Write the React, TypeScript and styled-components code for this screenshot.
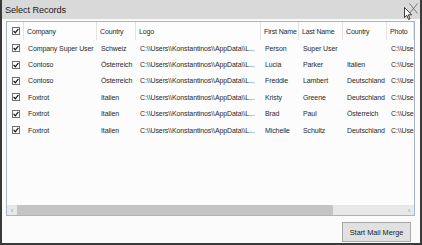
import styled, { createGlobalStyle } from 'styled-components'

const GlobalStyle = createGlobalStyle`
  html, body {
    margin: 0;
    padding: 0;
    background: #fbfbfb;
  }
  body {
    font-family: "Liberation Sans", Arial, sans-serif;
  }
`

type Record = {
  company: string
  country: string
  logo: string
  firstName: string
  lastName: string
  country2: string
  photo: string
}

const LOGO = 'C:\\\\Users\\\\Konstantinos\\\\AppData\\\\L...'
const PHOTO = 'C:\\\\User'

const records: Record[] = [
  { company: 'Company Super User', country: 'Schweiz', logo: LOGO, firstName: 'Person', lastName: 'Super User', country2: '', photo: PHOTO },
  { company: 'Contoso', country: 'Österreich', logo: LOGO, firstName: 'Lucia', lastName: 'Parker', country2: 'Italien', photo: PHOTO },
  { company: 'Contoso', country: 'Österreich', logo: LOGO, firstName: 'Freddie', lastName: 'Lambert', country2: 'Deutschland', photo: PHOTO },
  { company: 'Foxtrot', country: 'Italien', logo: LOGO, firstName: 'Kristy', lastName: 'Greene', country2: 'Deutschland', photo: PHOTO },
  { company: 'Foxtrot', country: 'Italien', logo: LOGO, firstName: 'Brad', lastName: 'Paul', country2: 'Österreich', photo: PHOTO },
  { company: 'Foxtrot', country: 'Italien', logo: LOGO, firstName: 'Michelle', lastName: 'Schultz', country2: 'Deutschland', photo: PHOTO }
]

const headers = ['Company', 'Country', 'Logo', 'First Name', 'Last Name', 'Country', 'Photo']

const Check = () => (
  <CheckBox>
    <svg width="6" height="6" viewBox="0 0 6 6">
      <path d="M0.6 3 L2.3 4.8 L5.4 0.8" fill="none" stroke="#202020" strokeWidth="1.3" />
    </svg>
  </CheckBox>
)

const App = () => {
  return (
    <>
      <GlobalStyle />
      <Window>
        <TitleBar>
          <Title>Select Records</Title>
          <CloseIcon width="9" height="11" viewBox="0 0 9 11">
            <path d="M0.5 0.5 L8.5 10.5 M8.5 0.5 L0.5 10.5" stroke="#707070" strokeWidth="0.9" />
          </CloseIcon>
          <Cursor width="9" height="14" viewBox="0 0 9 14">
            <path
              d="M0.5 0.5 L0.5 10.5 L2.8 8.3 L4.6 12.5 L6 11.9 L4.3 7.8 L7.6 7.8 Z"
              fill="#fff"
              stroke="#111"
              strokeWidth="0.8"
            />
          </Cursor>
        </TitleBar>
        <Body>
          <Grid>
            <Rows>
              <HeaderRow>
                <CheckCell $header>
                  <Check />
                </CheckCell>
                {headers.map((h, i) => (
                  <HeaderCell key={i}>{h}</HeaderCell>
                ))}
              </HeaderRow>
              {records.map((r, i) => (
                <DataRow key={i}>
                  <CheckCell>
                    <Check />
                  </CheckCell>
                  <Cell>{r.company}</Cell>
                  <Cell>{r.country}</Cell>
                  <Cell>{r.logo}</Cell>
                  <Cell>{r.firstName}</Cell>
                  <Cell>{r.lastName}</Cell>
                  <Cell>{r.country2}</Cell>
                  <Cell>{r.photo}</Cell>
                </DataRow>
              ))}
            </Rows>
            <ScrollBar>
              <ArrowButton>‹</ArrowButton>
              <Thumb />
              <Track />
              <ArrowButton>›</ArrowButton>
            </ScrollBar>
          </Grid>
          <Footer>
            <MergeButton>Start Mail Merge</MergeButton>
          </Footer>
        </Body>
      </Window>
    </>
  )
}

export default App

const Window = styled.div`
  width: 422px;
  height: 245px;
  box-sizing: border-box;
  border-left: 2px solid #3a3a3a;
  border-right: 2px solid #3a3a3a;
  border-bottom: 2px solid #3a3a3a;
  background: #fbfbfb;
  display: flex;
  flex-direction: column;
  overflow: hidden;
`

const TitleBar = styled.div`
  position: relative;
  height: 19px;
  flex-shrink: 0;
  background: #d9d9d9;
  display: flex;
  align-items: center;
  justify-content: space-between;
  padding: 0 2px 0 3px;
`

const Title = styled.div`
  font-size: 9.2px;
  color: #1c1c1c;
  letter-spacing: -0.1px;
  margin-top: 1px;
`

const CloseIcon = styled.svg`
  align-self: flex-start;
  margin-top: 3px;
`

const Cursor = styled.svg`
  position: absolute;
  left: 402px;
  top: 7px;
`

const Body = styled.div`
  flex: 1;
  display: flex;
  flex-direction: column;
  padding: 2px 5px 0 4px;
`

const Grid = styled.div`
  height: 195px;
  box-sizing: border-box;
  border: 1px solid #a7b4c6;
  background: #fcfcfc;
  display: flex;
  flex-direction: column;
  overflow: hidden;
`

const Rows = styled.div`
  flex: 1;
  overflow: hidden;
`

const columns = '17px 73px 39px 125px 38px 44px 44px 27px'

const HeaderRow = styled.div`
  display: grid;
  grid-template-columns: ${columns};
  height: 18px;
  background: #fdfdfd;
`

const DataRow = styled.div`
  display: grid;
  grid-template-columns: ${columns};
  height: 16.4px;
`

const CheckCell = styled.div<{ $header?: boolean }>`
  display: flex;
  align-items: center;
  justify-content: center;
  padding-left: 1px;
  border-right: ${({ $header }) => ($header ? '1px solid #e4e4e4' : 'none')};
  box-sizing: border-box;
`

const CheckBox = styled.div`
  width: 8px;
  height: 8px;
  box-sizing: border-box;
  border: 1px solid #6f6f6f;
  background: #fff;
  display: flex;
  align-items: center;
  justify-content: center;
`

const HeaderCell = styled.div`
  display: flex;
  align-items: center;
  padding-left: 3px;
  border-right: 1px solid #e4e4e4;
  font-size: 7px;
  letter-spacing: -0.15px;
  color: #2a2a2a;
  white-space: nowrap;
  overflow: hidden;
`

const Cell = styled.div`
  display: flex;
  align-items: center;
  padding-left: 4px;
  font-size: 7px;
  letter-spacing: -0.1px;
  color: #2a2a2a;
  white-space: nowrap;
  overflow: hidden;
`

const ScrollBar = styled.div`
  height: 10px;
  display: flex;
  background: #e8e8e8;
  flex-shrink: 0;
`

const ArrowButton = styled.div`
  width: 10px;
  display: flex;
  align-items: center;
  justify-content: center;
  font-size: 8px;
  color: #a0a0a0;
  background: #e8e8e8;
`

const Thumb = styled.div`
  width: 316px;
  background: #c4c4c4;
`

const Track = styled.div`
  flex: 1;
`

const Footer = styled.div`
  display: flex;
  justify-content: flex-end;
  padding: 6px 4px 0 0;
`

const MergeButton = styled.button`
  width: 69px;
  height: 20px;
  box-sizing: border-box;
  border: 1px solid #a8a8a8;
  background: #e1e1e1;
  font-family: "Liberation Sans", Arial, sans-serif;
  font-size: 7.3px;
  color: #1c1c1c;
  padding: 0;
`
